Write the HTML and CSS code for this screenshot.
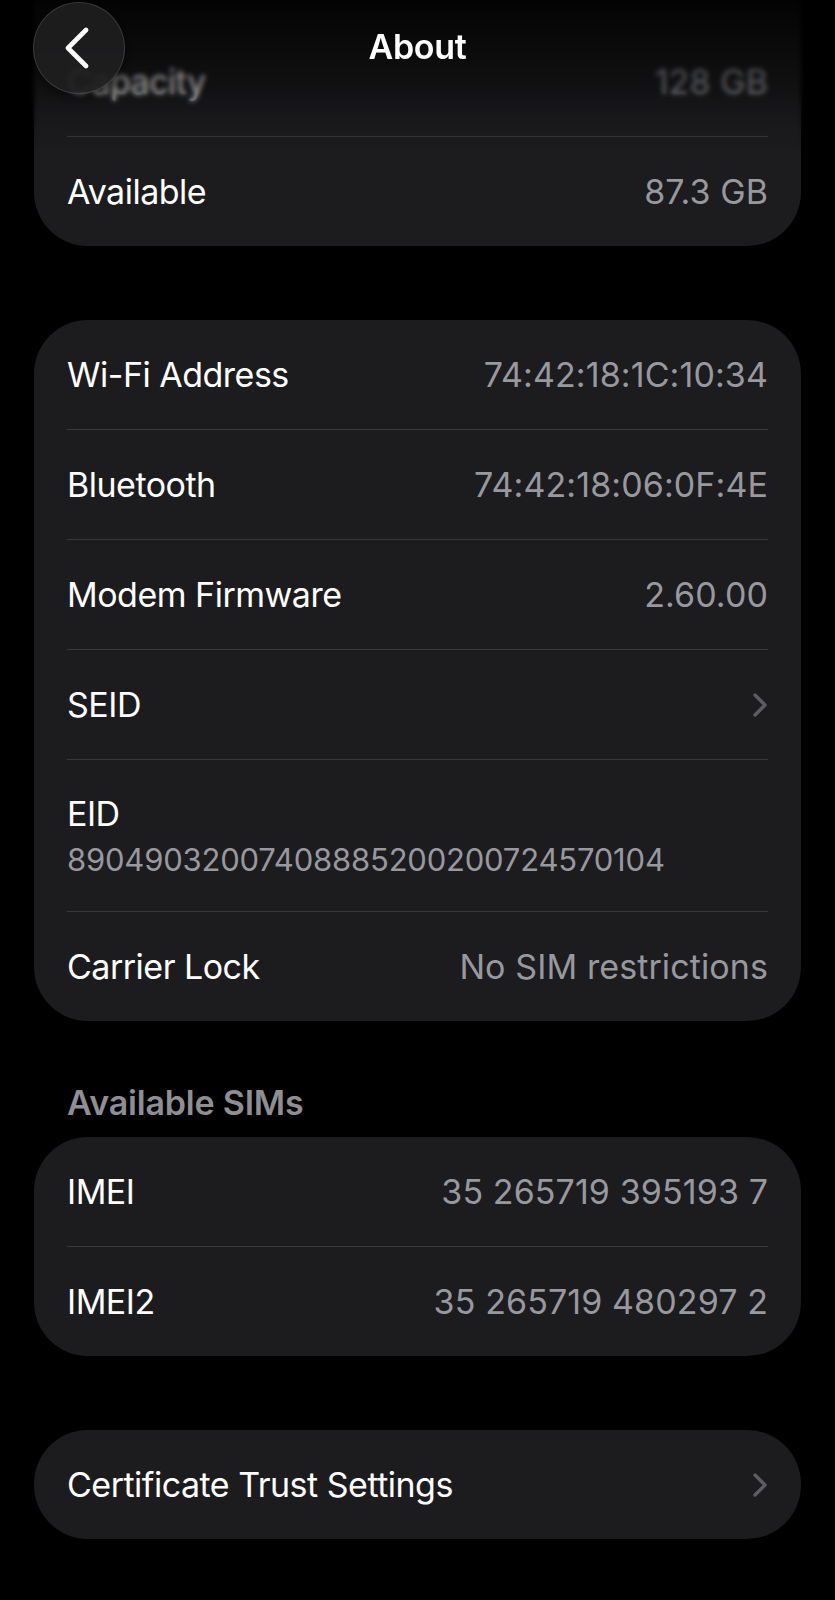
FILE: index.html
```html
<!DOCTYPE html>
<html lang="en">
<head>
    <meta charset="UTF-8">
    <meta name="viewport" content="width=device-width, initial-scale=1.0">
    <title>About</title>
    <link rel="stylesheet" href="styles.css">
</head>
<body>
    <header class="nav-bar">
        <button class="back-button" aria-label="Back">
            <svg width="30" height="42" viewBox="0 0 30 42">
                <path d="M24 3 L6 21 L24 39" fill="none" stroke="#fff" stroke-width="4.6" stroke-linecap="round" stroke-linejoin="round"/>
            </svg>
        </button>
        <h1 class="nav-title">About</h1>
    </header>

    <main class="page">
        <section class="group group-first">
            <div class="card">
                <div class="row">
                    <span class="label">Capacity</span>
                    <span class="value">128 GB</span>
                </div>
                <div class="row">
                    <span class="label">Available</span>
                    <span class="value">87.3 GB</span>
                </div>
            </div>
        </section>

        <section class="group">
            <div class="card">
                <div class="row">
                    <span class="label">Wi-Fi Address</span>
                    <span class="value">74:42:18:1C:10:34</span>
                </div>
                <div class="row">
                    <span class="label">Bluetooth</span>
                    <span class="value">74:42:18:06:0F:4E</span>
                </div>
                <div class="row">
                    <span class="label">Modem Firmware</span>
                    <span class="value">2.60.00</span>
                </div>
                <div class="row">
                    <span class="label">SEID</span>
                    <svg class="chevron" width="16" height="26" viewBox="0 0 16 26">
                        <path d="M3 3 L13 13 L3 23" fill="none" stroke="#5c5c61" stroke-width="3.4" stroke-linecap="round" stroke-linejoin="round"/>
                    </svg>
                </div>
                <div class="row row-stacked">
                    <span class="label">EID</span>
                    <span class="subvalue">89049032007408885200200724570104</span>
                </div>
                <div class="row">
                    <span class="label">Carrier Lock</span>
                    <span class="value">No SIM restrictions</span>
                </div>
            </div>
        </section>

        <section class="group group-titled">
            <h2 class="group-title">Available SIMs</h2>
            <div class="card">
                <div class="row">
                    <span class="label">IMEI</span>
                    <span class="value">35 265719 395193 7</span>
                </div>
                <div class="row">
                    <span class="label">IMEI2</span>
                    <span class="value">35 265719 480297 2</span>
                </div>
            </div>
        </section>

        <section class="group">
            <div class="card">
                <div class="row">
                    <span class="label">Certificate Trust Settings</span>
                    <svg class="chevron" width="16" height="26" viewBox="0 0 16 26">
                        <path d="M3 3 L13 13 L3 23" fill="none" stroke="#5c5c61" stroke-width="3.4" stroke-linecap="round" stroke-linejoin="round"/>
                    </svg>
                </div>
            </div>
        </section>
    </main>
</body>
</html>
```

FILE: styles.css
```css
body {
    margin: 0;
    background: #000;
    color: #fff;
    font-family: "Inter", "Noto Sans", sans-serif;
    overflow: hidden;
}

/* top bar sits over the scrolled list */
.nav-bar {
    position: absolute;
    top: 0;
    left: 0;
    right: 0;
    height: 150px;
    z-index: 10;
    display: flex;
    align-items: flex-start;
    justify-content: center;
    background: linear-gradient(to bottom, rgba(0, 0, 0, 0.88) 0%, rgba(0, 0, 0, 0.45) 50%, rgba(0, 0, 0, 0) 100%);
    backdrop-filter: blur(2.5px);
    -webkit-mask-image: linear-gradient(to bottom, #000 60%, transparent 100%);
    mask-image: linear-gradient(to bottom, #000 60%, transparent 100%);
}

.back-button {
    position: absolute;
    top: 2px;
    left: 33px;
    width: 92px;
    height: 92px;
    padding: 0;
    border-radius: 50%;
    border: 1.5px solid rgba(255, 255, 255, 0.13);
    background: rgba(30, 30, 32, 0.92);
    box-shadow: 0 4px 12px rgba(0, 0, 0, 0.5);
    display: flex;
    align-items: center;
    justify-content: center;
}

.back-button svg {
    margin-left: -4px;
}

.nav-title {
    margin: 0;
    margin-top: 25px;
    font-size: 34px;
    font-weight: 600;
    line-height: 44px;
    letter-spacing: -0.3px;
}

.page {
    padding: 0 34px;
    margin-top: -60px;
}

.group {
    margin-top: 74px;
}

.group-first {
    margin-top: 0;
}

.group-first .card {
    padding-top: 87px;
}

.group-titled {
    margin-top: 60px;
}

.group-title {
    margin: 0 0 12px 33px;
    font-size: 34px;
    font-weight: 600;
    line-height: 44px;
    color: #8e8e93;
    letter-spacing: -0.2px;
}

.card {
    background: #1c1c1e;
    border-radius: 54px;
    padding: 0 33px;
}

.row {
    display: flex;
    align-items: center;
    justify-content: space-between;
    min-height: 109px;
    font-size: 34px;
}

.row + .row {
    border-top: 1px solid #39393c;
}

.row-stacked {
    flex-direction: column;
    align-items: flex-start;
    justify-content: flex-start;
    padding: 32px 0 29px;
    min-height: 0;
}

.label {
    line-height: 44px;
    letter-spacing: -0.5px;
}

.value {
    line-height: 44px;
    color: #98989f;
    letter-spacing: 0.1px;
}

.subvalue {
    margin-top: 2px;
    line-height: 44px;
    font-size: 31px;
    color: #98989f;
    letter-spacing: -0.2px;
}

.chevron {
    display: block;
}
```
